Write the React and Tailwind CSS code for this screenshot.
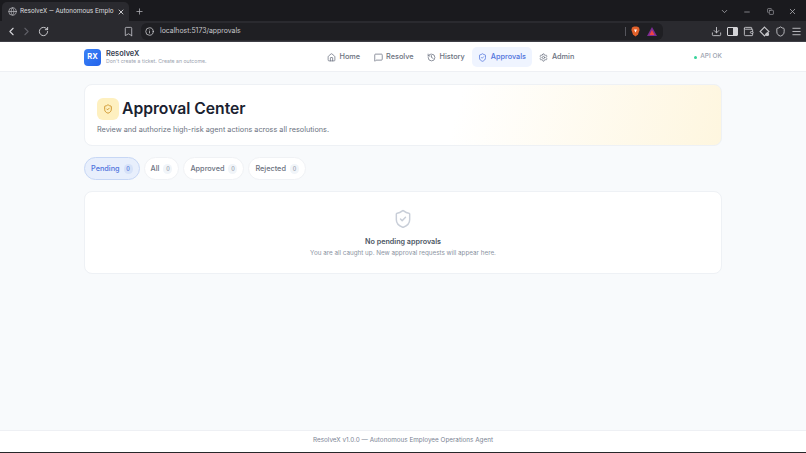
import React from "react";
import {
  ChevronLeft,
  ChevronRight,
  ChevronDown,
  RotateCw,
  Bookmark,
  Globe,
  X,
  Plus,
  Minus,
  Copy,
  Download,
  Wallet,
  Menu,
  Info,
  Home,
  MessageSquare,
  History,
  ShieldCheck,
  Settings,
  Shield,
} from "lucide-react";

const navItems = [
  { label: "Home", icon: Home },
  { label: "Resolve", icon: MessageSquare },
  { label: "History", icon: History },
  { label: "Approvals", icon: ShieldCheck, active: true },
  { label: "Admin", icon: Settings },
];

const tabs = [
  { label: "Pending", active: true },
  { label: "All" },
  { label: "Approved" },
  { label: "Rejected" },
];

const BrowserChrome = () => (
  <div className="shrink-0 text-[#d4d4d8]">
    <div className="flex h-[21px] items-end bg-[#1a1a1e] pl-[2px] pr-[6px]">
      <div className="flex h-[19px] w-[127px] items-center gap-[3px] rounded-t-[5px] bg-[#2a2a2f] pl-[6px] pr-[7px]">
        <Globe size={9} className="shrink-0 text-[#b4b4ba]" />
        <span className="flex-1 whitespace-nowrap font-['Roboto',sans-serif] text-[6.6px] text-[#d8d8dc]">
          ResolveX — Autonomous Emplo
        </span>
        <X size={8} className="shrink-0 text-[#e4e4e7]" strokeWidth={2.5} />
      </div>
      <Plus size={9} className="mb-[5px] ml-[6px] text-[#b4b4ba]" />
      <div className="mb-[5px] ml-auto flex items-center gap-[14px] pr-[3px] text-[#b4b4ba]">
        <ChevronDown size={9} />
        <Minus size={8} className="mr-[2px]" />
        <Copy size={7} />
        <X size={9} />
      </div>
    </div>
    <div className="flex h-[21px] items-center border-b border-[#3f3f46] bg-[#2a2a2f] pl-[5px] pr-[4px]">
      <ChevronLeft size={13} className="text-[#d4d4d8]" />
      <ChevronRight size={13} className="ml-[2px] text-[#5f5f66]" />
      <RotateCw size={11} className="ml-[5px] text-[#d4d4d8]" />
      <Bookmark size={11} className="ml-[74px] text-[#b4b4ba]" />
      <div className="ml-[7px] flex h-[17px] w-[522px] items-center rounded-[6px] bg-[#1f1f23] pl-[4px] pr-[6px]">
        <Info size={9} className="text-[#d4d4d8]" />
        <span className="ml-[6px] text-[6.9px] text-[#c8c8cc]">localhost:5173/approvals</span>
        <span className="ml-auto h-[9px] w-px bg-[#55555c]" />
        <svg width="9" height="11" viewBox="0 0 9 11" className="ml-[5px]">
          <path d="M1 1.5 3 .5h3l2 1 .6 2.5L7 8.5 4.5 10.5 2 8.5.4 4z" fill="#e0602a" />
          <path d="M3 3.5h3L4.5 6.5z" fill="#fff" />
        </svg>
        <svg width="10" height="9" viewBox="0 0 10 9" className="ml-[7px]">
          <path d="M5 0 10 9H0z" fill="#7c2d92" />
          <path d="M5 3 7.5 8h-5z" fill="#ef4444" />
        </svg>
      </div>
      <div className="ml-auto flex items-center gap-[5px] text-[#c4c4c8]">
        <Download size={11} />
        <span className="flex h-[9px] w-[11px] rounded-[1px] border border-[#d4d4d8]">
          <span className="ml-auto w-[4px] bg-[#d4d4d8]" />
        </span>
        <Wallet size={11} />
        <svg width="11" height="11" viewBox="0 0 10 10" fill="none" stroke="currentColor">
          <path d="M5 1 9 5 5 9 1 5z" />
          <circle cx="7.5" cy="7.5" r="1.2" fill="currentColor" />
        </svg>
        <Shield size={11} />
        <Menu size={11} />
      </div>
    </div>
  </div>
);

const Header = () => (
  <header className="flex h-[30px] shrink-0 items-center border-b border-[#eef0f4] bg-white pl-[84px] pr-[84px] pt-px">
    <div className="flex w-[200px] items-center gap-[5px]">
      <div className="flex h-[17px] w-[17px] items-center justify-center rounded-[4px] bg-gradient-to-br from-[#3b82f6] to-[#2563eb] text-[7.5px] font-bold text-white">
        RX
      </div>
      <div className="leading-none">
        <div className="text-[7.4px] font-semibold leading-[9px] text-[#374151]">ResolveX</div>
        <div className="text-[5.2px] leading-[7px] text-[#9ca3af]">
          Don't create a ticket. Create an outcome.
        </div>
      </div>
    </div>
    <nav className="ml-[37px] flex items-center gap-[1.5px]">
      {navItems.map((item) => (
        <div
          key={item.label}
          className={`flex h-[20px] items-center gap-[3.5px] rounded-[5px] px-[6px] text-[7.3px] font-medium ${
            item.active ? "bg-[#eff4ff] text-[#4f73dc]" : "text-[#6b7280]"
          }`}
        >
          <item.icon size={9} />
          {item.label}
        </div>
      ))}
    </nav>
    <div className="ml-auto flex items-center gap-[3px] text-[6.5px] font-medium text-[#9ca3af]">
      <span className="h-[3px] w-[3px] rounded-full bg-[#34d399]" />
      API OK
    </div>
  </header>
);

const App = () => {
  return (
    <div className="flex h-[453px] w-[806px] flex-col overflow-hidden bg-[#f8fafc] font-['Inter',sans-serif]">
      <BrowserChrome />
      <Header />
      <main className="flex flex-1 flex-col px-[84px] pt-[12px]">
        <section className="h-[62px] rounded-[8px] border border-[#eef1f5] bg-[linear-gradient(105deg,#ffffff_58%,#fef6df_100%)] px-[12px] pt-[12px]">
          <div className="flex items-center gap-[3px]">
            <div className="flex h-[22px] w-[22px] items-center justify-center rounded-[6px] bg-[#fef0c0]">
              <ShieldCheck size={10} className="text-[#c98a1a]" />
            </div>
            <h1 className="pt-px text-[15.7px] font-semibold leading-[22px] text-[#1a2230]">Approval Center</h1>
          </div>
          <p className="mt-[4.5px] text-[7.3px] leading-[10px] text-[#6b7280]">
            Review and authorize high-risk agent actions across all resolutions.
          </p>
        </section>

        <div className="mt-[11px] flex gap-[4px]">
          {tabs.map((tab) => (
            <div
              key={tab.label}
              className={`flex h-[23px] items-center gap-[4px] rounded-full border px-[6px] pt-px text-[7.3px] font-medium ${
                tab.active
                  ? "border-[#c7d7f5] bg-[#e8effc] text-[#4f73dc]"
                  : "border-[#f0f2f5] bg-white text-[#6b7280]"
              }`}
            >
              {tab.label}
              <span
                className={`flex h-[10px] w-[9px] items-center justify-center rounded-full text-[5.5px] ${
                  tab.active ? "bg-[#d6e2f8] text-[#4f73dc]" : "bg-[#f1f5f9] text-[#9ca3af]"
                }`}
              >
                0
              </span>
            </div>
          ))}
        </div>

        <section className="mt-[11px] flex h-[83px] flex-col items-center rounded-[8px] border border-[#eef1f5] bg-white pt-[17px]">
          <ShieldCheck size={20} strokeWidth={1.75} className="text-[#c8ced8]" />
          <div className="mt-[7px] text-[7.2px] font-semibold leading-[11px] text-[#4b5563]">No pending approvals</div>
          <div className="mt-[0.5px] text-[6.3px] leading-[10px] text-[#8b93a1]">
            You are all caught up. New approval requests will appear here.
          </div>
        </section>
      </main>
      <footer className="flex h-[22px] shrink-0 items-center justify-center border-t border-[#eef0f4] bg-white pb-[1px] text-[6.35px] text-[#7b8494]">
        ResolveX v1.0.0 — Autonomous Employee Operations Agent
      </footer>
      <div className="h-px shrink-0 bg-[#27272a]" />
    </div>
  );
};

export default App;
